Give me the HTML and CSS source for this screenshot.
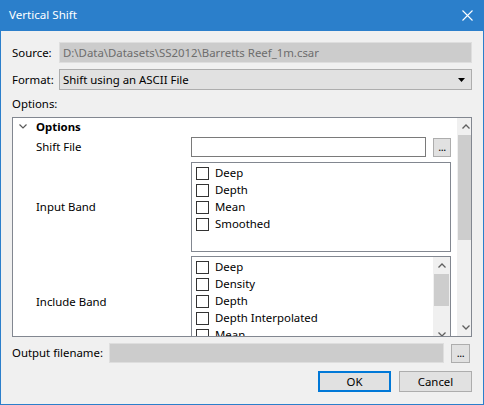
FILE: index.html
```html
<!DOCTYPE html>
<html>
<head>
<meta charset="utf-8">
<link rel="stylesheet" href="styles.css">
</head>
<body>
<div class="window">
  <div class="titlebar">
    <span class="title">Vertical Shift</span>
    <svg class="close" width="11" height="11" viewBox="0 0 11 11"><path d="M0.5 0.5 L10.5 10.5 M10.5 0.5 L0.5 10.5" stroke="#ffffff" stroke-width="1.1" fill="none"/></svg>
  </div>
  <div class="content">
    <div class="row source-row">
      <span class="lbl">Source:</span>
      <div class="field disabled">D:\Data\Datasets\SS2012\Barretts Reef_1m.csar</div>
    </div>
    <div class="row format-row">
      <span class="lbl">Format:</span>
      <div class="combo">
        <span>Shift using an ASCII File</span>
        <svg class="drop" width="7" height="4" viewBox="0 0 7 4"><path d="M0 0 H7 L3.5 4 Z" fill="#000"/></svg>
      </div>
    </div>
    <div class="opt-label">Options:</div>
    <div class="panel">
      <div class="panel-body">
        <div class="group-head">
          <svg class="chev" width="8" height="5" viewBox="0 0 8 5"><path d="M0.5 0.5 L4 4 L7.5 0.5" stroke="#5a5a5a" stroke-width="1.2" fill="none"/></svg>
          <span>Options</span>
        </div>
        <div class="prop prop-shift">
          <div class="prop-name">Shift File</div>
          <div class="prop-value shift-value">
            <div class="textbox"></div>
            <div class="btn-dots">...</div>
          </div>
        </div>
        <div class="prop prop-input">
          <div class="prop-name">Input Band</div>
          <div class="prop-value">
            <div class="list list-input">
              <div class="item"><span class="cb"></span>Deep</div>
              <div class="item"><span class="cb"></span>Depth</div>
              <div class="item"><span class="cb"></span>Mean</div>
              <div class="item"><span class="cb"></span>Smoothed</div>
            </div>
          </div>
        </div>
        <div class="prop prop-include">
          <div class="prop-name">Include Band</div>
          <div class="prop-value">
            <div class="list list-include">
              <div class="list-items">
                <div class="item"><span class="cb"></span>Deep</div>
                <div class="item"><span class="cb"></span>Density</div>
                <div class="item"><span class="cb"></span>Depth</div>
                <div class="item"><span class="cb"></span>Depth Interpolated</div>
                <div class="item"><span class="cb"></span>Mean</div>
              </div>
              <div class="vscroll small">
                <div class="arrow"><svg width="8" height="5" viewBox="0 0 8 5"><path d="M0.5 4.5 L4 1 L7.5 4.5" stroke="#606060" stroke-width="1.3" fill="none"/></svg></div>
                <div class="thumb thumb-small"></div>
                <div class="track"></div>
                <div class="arrow"><svg width="8" height="5" viewBox="0 0 8 5"><path d="M0.5 0.5 L4 4 L7.5 0.5" stroke="#606060" stroke-width="1.3" fill="none"/></svg></div>
              </div>
            </div>
          </div>
        </div>
      </div>
      <div class="vscroll outer">
        <div class="arrow"><svg width="8" height="5" viewBox="0 0 8 5"><path d="M0.5 4.5 L4 1 L7.5 4.5" stroke="#606060" stroke-width="1.3" fill="none"/></svg></div>
        <div class="thumb thumb-outer"></div>
        <div class="track"></div>
        <div class="arrow"><svg width="8" height="5" viewBox="0 0 8 5"><path d="M0.5 0.5 L4 4 L7.5 0.5" stroke="#606060" stroke-width="1.3" fill="none"/></svg></div>
      </div>
    </div>
    <div class="row output-row">
      <span class="lbl lbl-output">Output filename:</span>
      <div class="field disabled out-field"></div>
      <div class="btn-dots out-dots">...</div>
    </div>
    <div class="buttons">
      <div class="btn btn-default">OK</div>
      <div class="btn">Cancel</div>
    </div>
  </div>
</div>
</body>
</html>
```

FILE: styles.css
```css
* { box-sizing: border-box; }
html, body { margin: 0; padding: 0; }
body {
  font-family: "Noto Sans", "Liberation Sans", sans-serif;
  font-size: 11.4px;
  color: #000;
  background: #f0f0f0;
}
.window {
  width: 484px;
  height: 405px;
  border: 1px solid #2b7fcb;
  border-top: none;
  background: #f0f0f0;
  display: flex;
  flex-direction: column;
  overflow: hidden;
}
.titlebar {
  height: 31px;
  background: #2b7fcb;
  display: flex;
  align-items: center;
  justify-content: space-between;
  padding: 0 9px 1px 8px;
  color: #fff;
  flex: none;
}
.title { font-size: 11.6px; line-height: 16px; }
.close { display: block; margin-right: 1px; }
.content {
  padding: 11px 11px 0 11px;
  display: flex;
  flex-direction: column;
}
.row { display: flex; align-items: center; }
.lbl { width: 47px; flex: none; line-height: 16px; }
.field {
  flex: 1;
  height: 21px;
  line-height: 19px;
  padding-left: 3px;
  white-space: nowrap;
  overflow: hidden;
}
.disabled {
  background: #cccccc;
  border: 1px solid #dedede;
  color: #6d6d6d;
}
.format-row { margin-top: 6px; }
.combo {
  flex: 1;
  height: 21px;
  background: #e1e1e1;
  border: 1px solid #adadad;
  display: flex;
  align-items: center;
  justify-content: space-between;
  padding: 0 6px 0 3px;
  line-height: 19px;
}
.drop { display: block; }
.opt-label { margin-top: 6px; line-height: 16px; height: 16px; }
.panel {
  margin-top: 5px;
  height: 220px;
  border: 1px solid #828790;
  background: #fff;
  display: flex;
  overflow: hidden;
}
.panel-body {
  width: 441px;
  flex: none;
  overflow: hidden;
  display: flex;
  flex-direction: column;
}
.group-head {
  height: 19px;
  padding-bottom: 2px;
  display: flex;
  align-items: center;
  font-weight: bold;
  flex: none;
}
.chev { display: block; margin-left: 6px; margin-right: 9px; }
.prop { display: flex; align-items: center; flex: none; }
.prop-name { width: 178px; padding-left: 23px; flex: none; line-height: 16px; }
.prop-value { width: 260px; flex: none; }
.shift-value { display: flex; align-items: center; justify-content: space-between; height: 20px; }
.textbox {
  width: 235px;
  height: 20px;
  border: 1px solid #7a7a7a;
  background: #fff;
}
.btn-dots {
  width: 18px;
  height: 19px;
  background: #e1e1e1;
  border: 1px solid #adadad;
  font-size: 11px;
  line-height: 15px;
  text-align: center;
  letter-spacing: -0.5px;
}
.prop-input { margin-top: 5px; }
.prop-include { margin-top: 4px; align-items: flex-start; }
.prop-include .prop-name { margin-top: 38px; }
.list {
  border: 1px solid #828790;
  background: #fff;
  padding: 2px 0 0 4px;
}
.list-input { height: 90px; }
.list-include {
  height: 88px;
  display: flex;
  padding: 0;
}
.list-items { flex: 1; padding: 2px 0 0 4px; overflow: hidden; }
.item {
  height: 17px;
  padding-bottom: 1px;
  display: flex;
  align-items: center;
  white-space: nowrap;
  line-height: 16px;
}
.cb {
  width: 13px;
  height: 13px;
  border: 1px solid #333333;
  background: #fff;
  margin-right: 6px;
  flex: none;
}
.vscroll {
  width: 17px;
  flex: none;
  background: #f0f0f0;
  display: flex;
  flex-direction: column;
}
.vscroll .arrow {
  height: 17px;
  display: flex;
  align-items: center;
  justify-content: center;
  flex: none;
}
.vscroll .arrow svg { display: block; }
.thumb { margin: 0 1px; background: #cdcdcd; flex: none; }
.thumb-outer { height: 105px; }
.thumb-small { height: 32px; }
.track { flex: 1; }
.outer { margin-left: 3px; }
.output-row { margin-top: 6px; height: 20px; }
.lbl-output { width: 97px; }
.out-field { height: 20px; flex: none; width: 335px; }
.out-dots { margin-left: 7px; width: 19px; }
.buttons {
  display: flex;
  justify-content: flex-end;
  margin-top: 8px;
  gap: 8px;
}
.btn {
  width: 73px;
  height: 21px;
  background: #e1e1e1;
  border: 1px solid #adadad;
  text-align: center;
  line-height: 19px;
}
.btn-default {
  border: 2px solid #0078d7;
  line-height: 17px;
}
```
